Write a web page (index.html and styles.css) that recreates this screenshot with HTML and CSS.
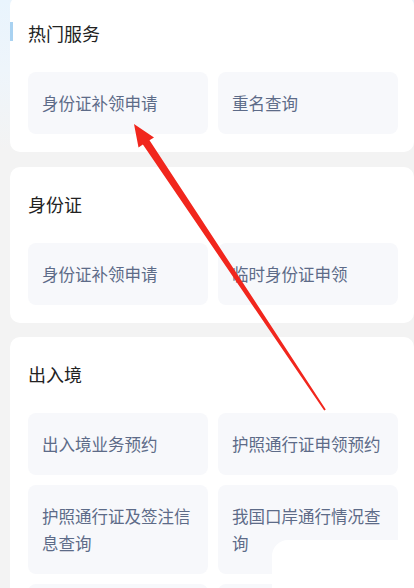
FILE: index.html
```html
<!DOCTYPE html>
<html lang="zh-CN">
<head>
  <meta charset="UTF-8">
  <meta name="viewport" content="width=device-width, initial-scale=1.0">
  <title>服务大厅</title>
  <link rel="stylesheet" href="styles.css">
</head>
<body>
  <div class="page">
    <section class="card card-active">
      <h2 class="card-title">热门服务</h2>
      <div class="items">
        <div class="item">身份证补领申请</div>
        <div class="item">重名查询</div>
      </div>
    </section>

    <section class="card">
      <h2 class="card-title">身份证</h2>
      <div class="items">
        <div class="item">身份证补领申请</div>
        <div class="item">临时身份证申领</div>
      </div>
    </section>

    <section class="card">
      <h2 class="card-title">出入境</h2>
      <div class="items">
        <div class="item">出入境业务预约</div>
        <div class="item">护照通行证申领预约</div>
        <div class="item">护照通行证及签注信息查询</div>
        <div class="item">我国口岸通行情况查询</div>
        <div class="item item-empty"></div>
        <div class="item item-empty"></div>
      </div>
    </section>

    <div class="float-panel"></div>

    <svg class="arrow" width="414" height="588" viewBox="0 0 414 588">
      <polygon fill="#f1261d" points="134,124 154,137.5 149.5,140.3 325.8,409.4 324.2,410.6 142.9,144.5 138.5,147.5"/>
    </svg>
  </div>
</body>
</html>
```

FILE: styles.css
```css
body {
  margin: 0;
  font-family: "Noto Sans CJK SC", "Noto Sans", sans-serif;
  background: #f3f3f3;
  overflow: hidden;
}

.page {
  position: relative;
  height: 588px;
  padding-top: 1px;
  box-sizing: border-box;
  overflow: hidden;
  background: linear-gradient(180deg, #e9f4fd 0px, #eef5fb 70px, #f3f3f3 150px);
}

.card {
  position: relative;
  background: #fff;
  border-radius: 10px;
  margin: 0 0 14px 10px;
  padding: 22px 16px 18px 18px;
}

.card:first-child {
  margin-top: -5px;
  margin-bottom: 15px;
}

.card-active::before {
  content: "";
  position: absolute;
  left: 0;
  top: 26px;
  width: 3px;
  height: 19px;
  background: #a9d2f1;
}

.card-title {
  margin: 0 0 24px;
  font-size: 18px;
  line-height: 30px;
  font-weight: 400;
  color: #222;
}

.items {
  display: grid;
  grid-template-columns: 1fr 1fr;
  gap: 10px;
}

.item {
  background: #f7f8fb;
  border-radius: 8px;
  padding: 18px 14px 17px;
  font-size: 16.5px;
  line-height: 27px;
  color: #5d6b88;
}

.item-empty {
  min-height: 27px;
}

.float-panel {
  position: absolute;
  left: 272px;
  top: 540px;
  width: 160px;
  height: 80px;
  background: #fff;
  border-radius: 16px;
}

.arrow {
  position: absolute;
  left: 0;
  top: 0;
}
```
